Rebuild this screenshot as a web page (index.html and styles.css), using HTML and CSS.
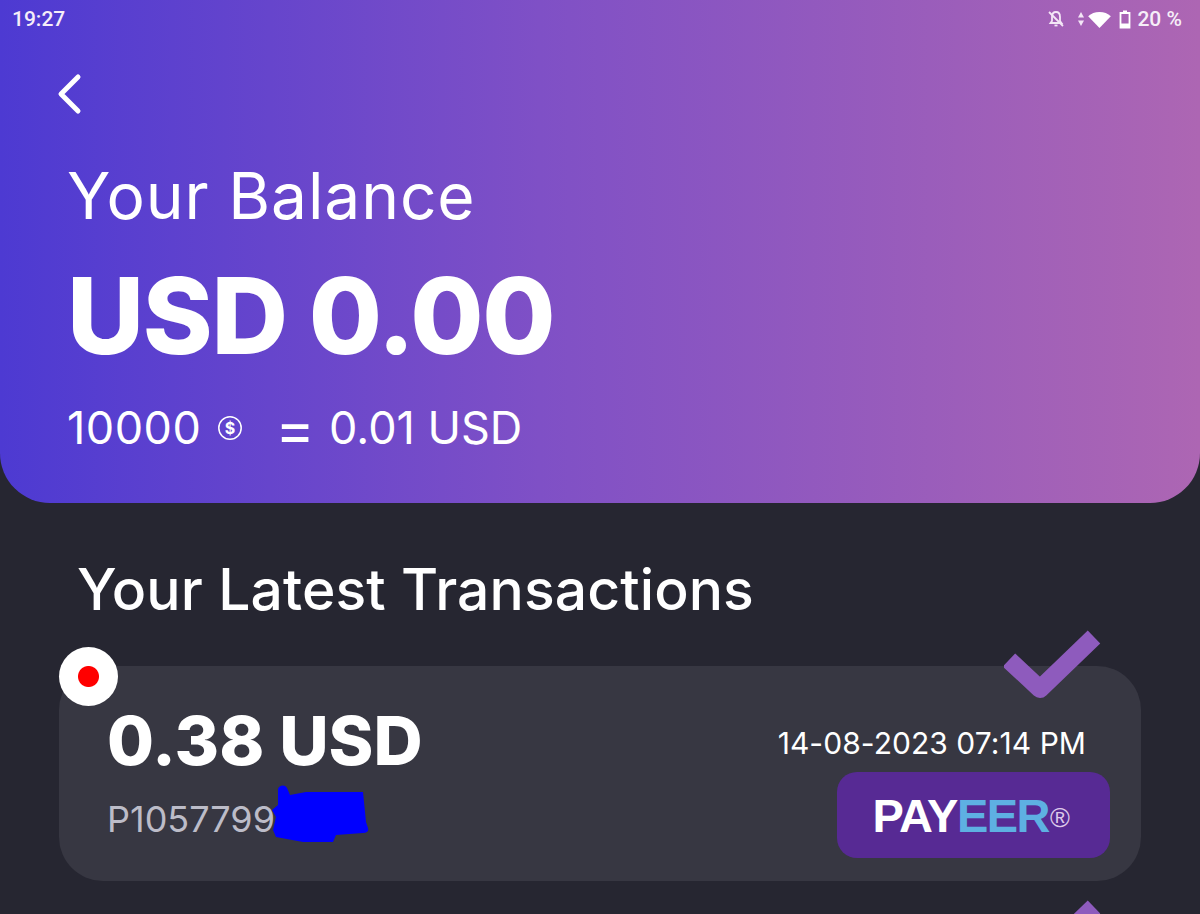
FILE: index.html
```html
<!DOCTYPE html>
<html lang="en">
<head>
  <meta charset="UTF-8" />
  <meta name="viewport" content="width=device-width, initial-scale=1.0" />
  <title>Your Balance</title>
  <link rel="stylesheet" href="styles.css">
</head>
<body>
  <header class="balance-panel">
    <div class="status-bar">
      <span class="status-time">19:27</span>
      <div class="status-icons">
        <svg class="icon-bell" viewBox="0 0 20 20" width="20" height="20" fill="none" stroke="#f3e6f6" stroke-width="1.8">
          <path d="M6 8c0-3 1.700-5 4-5s4 2 4 5v4l1.500 2h-11l1.500-2z" />
          <path d="M8.500 16.500h3" />
          <path d="M3 3l14 14" />
        </svg>
        <svg class="icon-data" viewBox="0 0 8 16" width="8" height="16" fill="#f3e6f6">
          <path d="M4 1l3 5.500H1z" />
          <path d="M4 15l3-5.500H1z" />
        </svg>
        <svg class="icon-wifi" viewBox="0 0 24 18" width="23" height="17" fill="#fff">
          <path d="M0 5.500C3 2.500 7.300 1 12 1s9 1.500 12 4.500L12 18z" />
        </svg>
        <svg class="icon-battery" viewBox="0 0 12 20" width="12" height="20" fill="none" stroke="#fff" stroke-width="1.800">
          <path d="M1.500 4h9v14.500h-9z" />
          <path d="M4 1.500h4v2H4z" fill="#fff" stroke="none" />
          <path d="M1.500 14.500h9v4h-9z" fill="#fff" stroke="none" />
        </svg>
        <span class="status-level">20 %</span>
      </div>
    </div>

    <button class="back-button" aria-label="Back">
      <svg viewBox="0 0 26 42" width="26" height="42" fill="none" stroke="#fff" stroke-width="5" stroke-linecap="round" stroke-linejoin="round">
        <path d="M21 4L4 21l17 17" />
      </svg>
    </button>

    <h1 class="balance-title">Your Balance</h1>
    <div class="balance-amount">USD 0.00</div>
    <div class="balance-rate">
      <span class="rate-coins">10000</span>
      <svg class="coin" viewBox="0 0 26 26" width="26" height="26" fill="none" stroke="#fff" stroke-width="1.500">
        <circle cx="13" cy="13" r="11.200" />
        <text x="13" y="18.500" text-anchor="middle" class="coin-sign">$</text>
      </svg>
      <span class="rate-equals">=</span>
      <span>0.01 USD</span>
    </div>
  </header>

  <main class="transactions">
    <h2 class="transactions-title">Your Latest Transactions</h2>

    <div class="transaction-list">
      <article class="transaction-card">
        <span class="state-dot"></span>
        <svg class="check" viewBox="0 0 98 76" width="98" height="76" fill="none" stroke="#8e5bbd" stroke-width="18" stroke-linejoin="round">
          <path d="M5 30l31 29L90 7" />
        </svg>
        <div class="transaction-main">
          <div class="transaction-amount">0.38 USD</div>
          <div class="transaction-account">P1057799</div>
          <svg class="scribble" viewBox="-1 0 97 57" width="97" height="57" fill="#0000ff">
            <path d="M5 4c1-4 7-5 9-1l3 7 16-3 57 0 3 30 2 6c1 3-1 5-5 5l-27 2-3 7-30 0-27-5-3-7 3-13-4-7 6-5z" />
          </svg>
        </div>
        <div class="transaction-side">
          <div class="transaction-date">14-08-2023 07:14 PM</div>
          <div class="payeer-badge">
            <span class="payeer-pay">PAY</span><span class="payeer-eer">EER</span><span class="payeer-mark">®</span>
          </div>
        </div>
      </article>

      <article class="transaction-card">
        <svg class="check" viewBox="0 0 98 76" width="98" height="76" fill="none" stroke="#8e5bbd" stroke-width="18" stroke-linejoin="round">
          <path d="M5 30l31 29L90 7" />
        </svg>
      </article>
    </div>
  </main>
</body>
</html>
```

FILE: styles.css
```css
* {
  box-sizing: border-box;
}

html,
body {
  height: 914px;
  overflow: hidden;
}

body {
  margin: 0;
  background: #262631;
  color: #fff;
  font-family: 'Inter', 'Open Sans', sans-serif;
}

.balance-panel {
  height: 503px;
  padding: 0 12px;
  border-radius: 0 0 50px 50px;
  background: linear-gradient(90deg, #4d3ad2 0%, #7f50c6 45%, #ad66b3 100%);
}

.status-bar {
  display: flex;
  justify-content: space-between;
  align-items: center;
  height: 38px;
  color: #f6eef8;
  font-family: 'Roboto', sans-serif;
  font-size: 21px;
  font-weight: 500;
}

.status-icons {
  display: flex;
  align-items: center;
  margin-right: 6px;
}

.icon-bell {
  margin-right: 11px;
}

.icon-data {
  margin-right: 3px;
}

.icon-wifi {
  margin-right: 8px;
}

.icon-battery {
  margin-right: 6px;
}

.back-button {
  display: block;
  height: 42px;
  margin: 35px 0 0 45px;
  padding: 0;
  border: none;
  background: none;
}

.balance-title {
  margin: 45px 0 0 55px;
  font-size: 64px;
  font-weight: 400;
  line-height: 72px;
  letter-spacing: 0.9px;
}

.balance-amount {
  margin: 28px 0 0 55px;
  font-size: 106px;
  font-weight: 800;
  line-height: 112px;
  letter-spacing: -1.3px;
}

.balance-rate {
  display: flex;
  align-items: center;
  margin: 29px 0 0 55px;
  font-size: 45px;
  line-height: 54px;
}

.rate-coins {
  letter-spacing: 0.5px;
}

.coin {
  margin: 0 32px 0 16px;
}

.coin-sign {
  fill: #fff;
  stroke: none;
  font-family: 'Inter', sans-serif;
  font-size: 16px;
  font-weight: 700;
}

.rate-equals {
  margin-right: 14px;
  font-size: 60px;
}

.transactions {
  height: 411px;
  padding: 0 59px;
  overflow: hidden;
}

.transactions-title {
  margin: 55px 0 0 18px;
  font-size: 57px;
  font-weight: 500;
  line-height: 64px;
  letter-spacing: 0.1px;
}

.transaction-list {
  display: flex;
  flex-direction: column;
  gap: 55px;
  margin-top: 44px;
}

.transaction-card {
  position: relative;
  display: flex;
  justify-content: space-between;
  flex-shrink: 0;
  height: 215px;
  padding: 38px 31px 23px 48px;
  border-radius: 44px;
  background: #373742;
}

.state-dot {
  position: absolute;
  top: -19px;
  left: 0;
  width: 59px;
  height: 59px;
  border-radius: 50%;
  background: radial-gradient(circle, #ff0000 0 10px, #fff 11px);
}

.check {
  position: absolute;
  top: -36px;
  right: 39px;
}

.transaction-main {
  position: relative;
}

.transaction-amount {
  font-size: 68px;
  font-weight: 800;
  line-height: 72px;
}

.transaction-account {
  margin-top: 21px;
  color: #bcbcc8;
  font-size: 36px;
  line-height: 44px;
}

.scribble {
  position: absolute;
  top: 81px;
  left: 165px;
}

.transaction-side {
  display: flex;
  flex-direction: column;
  align-items: flex-end;
}

.transaction-date {
  margin: 21px 24px 0 0;
  font-size: 30px;
  line-height: 36px;
  letter-spacing: 0.05px;
}

.payeer-badge {
  display: flex;
  justify-content: center;
  align-items: center;
  width: 273px;
  height: 86px;
  margin-top: 11px;
  padding-right: 6px;
  border-radius: 20px;
  background: #572a94;
  font-family: 'Liberation Sans', sans-serif;
  font-size: 47px;
  font-weight: 700;
  letter-spacing: -1.5px;
}

.payeer-eer {
  color: #5eb0e2;
}

.payeer-mark {
  margin: 7px 0 0 1px;
  color: #dcc8ea;
  font-size: 27px;
  font-weight: 400;
}
```
